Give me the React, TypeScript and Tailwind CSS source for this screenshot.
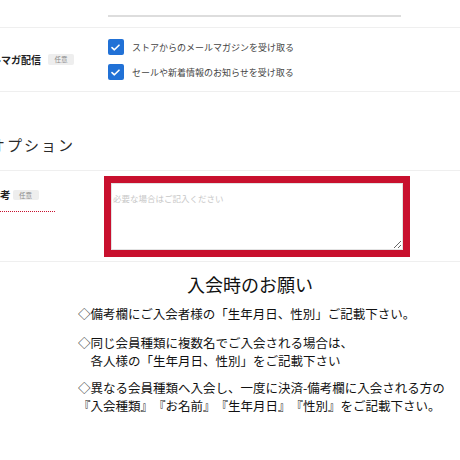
import React from "react";

function Badge({ className = "" }: { className?: string }) {
  return (
    <span
      className={
        "flex h-[10.5px] w-[26px] shrink-0 items-center justify-center rounded-[2px] bg-[#eeeeee] text-[6.5px] leading-none text-[#8a8a8a] " +
        className
      }
    >
      任意
    </span>
  );
}

function Check({ label }: { label: string }) {
  return (
    <div className="flex items-center">
      <span className="flex h-[15.5px] w-[15.5px] items-center justify-center rounded-[2px] bg-[#2171d6]">
        <svg width="9" height="7" viewBox="0 0 9 7" fill="none">
          <path d="M1 3.6 L3.4 5.8 L8 1.2" stroke="white" strokeWidth="1.6" strokeLinecap="round" strokeLinejoin="round" />
        </svg>
      </span>
      <span className="ml-[8.5px] text-[9px] leading-none text-[#444]">{label}</span>
    </div>
  );
}

export default function App() {
  return (
    <div
      className="relative h-[460px] w-[460px] overflow-hidden bg-white [text-spacing-trim:space-all]"
      style={{ fontFamily: '"Noto Sans CJK JP", "Noto Sans", sans-serif' }}
    >
      {/* top input remainder */}
      <div className="h-[28px] border-b border-[#efefef] pt-[15px]">
        <div className="ml-[108px] h-[1.5px] w-[293px] bg-[#dddddd]" />
      </div>

      {/* mail magazine row */}
      <div className="flex h-[64px] items-center border-b border-[#efefef]">
        <div className="flex w-[108px] items-center">
          <span className="ml-[-19px] whitespace-nowrap text-[10px] font-bold leading-[10px] text-[#222]">
            メルマガ配信
          </span>
          <Badge className="ml-[7px]" />
        </div>
        <div className="flex flex-col gap-[9.5px]">
          <Check label="ストアからのメールマガジンを受け取る" />
          <Check label="セールや新着情報のお知らせを受け取る" />
        </div>
      </div>

      {/* option heading */}
      <div className="border-b border-[#efefef] pb-[15px] pt-[43px]">
        <div className="ml-[-10px] whitespace-nowrap text-[15px] leading-[20px] tracking-[2px] text-[#2a2a2a]">
          オプション
        </div>
      </div>

      {/* bikou row */}
      <div className="flex h-[91px] border-b border-[#efefef]">
        <div className="w-[104px]">
          <div className="mt-[18.5px] flex h-[10.5px] items-center">
            <span className="ml-[-10.5px] whitespace-nowrap text-[10.5px] font-bold leading-[10px] text-[#222]">
              備考
            </span>
            <Badge className="ml-[2px]" />
          </div>
          <div className="mt-[11px] h-px w-[55px] bg-[repeating-linear-gradient(90deg,#c8102e_0px,#c8102e_1px,transparent_1px,transparent_2px)]" />
        </div>
        <div className="mt-[5px] h-[81px] w-[306px] border-[7px] border-[#c8102e]">
          <textarea
            className="block h-full w-full resize-y border border-[#e2e2e2] bg-white px-[1px] pt-[8px] text-[8.5px] leading-[12px] text-[#333] outline-none placeholder:text-[#c8c8c8]"
            placeholder="必要な場合はご記入ください"
          />
        </div>
      </div>

      {/* notice */}
      <div className="pt-[10px] text-[#111]">
        <div className="pl-[40px] text-center text-[18px] leading-[24px]">入会時のお願い</div>
        <div className="pl-[78px] text-[12.5px] leading-[17.5px]">
          <p className="mt-[9px] whitespace-nowrap">{"◇備考欄にご入会者様の「生年月日、性別」ご記載下さい。"}</p>
          <p className="mt-[11.5px] whitespace-nowrap">
            {"◇同じ会員種類に複数名でご入会される場合は、"}
            <br />
            {"\u3000各人様の「生年月日、性別」をご記載下さい"}
          </p>
          <p className="mt-[10px] whitespace-nowrap">
            {"◇異なる会員種類へ入会し、一度に決済-備考欄に入会される方の"}
            <br />
            {"『入会種類』『お名前』『生年月日』『性別』をご記載下さい。"}
          </p>
        </div>
      </div>
    </div>
  );
}
